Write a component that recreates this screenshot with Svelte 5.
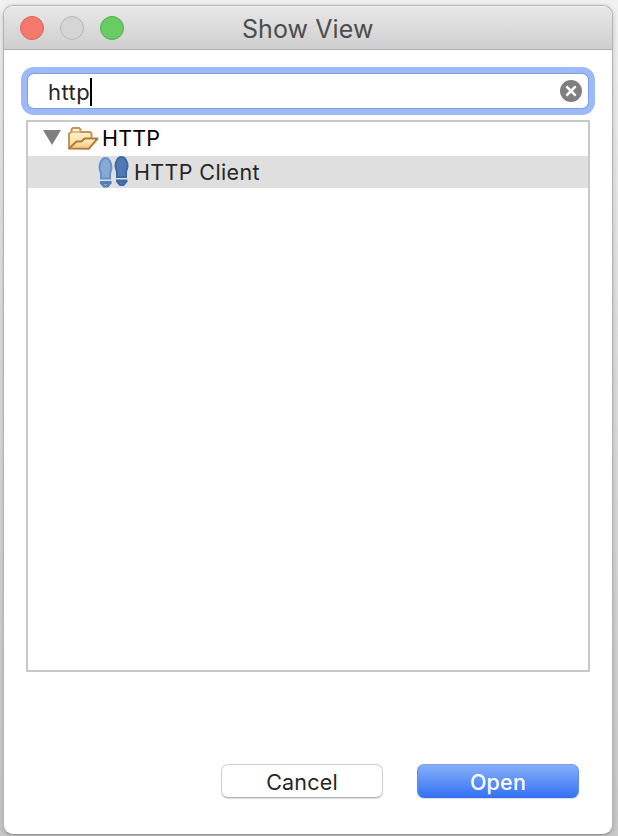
<script>
  let query = $state('http');
</script>

<div class="desktop">
  <section class="window">
    <header>
      <div class="lights"><i class="red"></i><i class="idle"></i><i class="green"></i></div>
      <h1>Show View</h1>
    </header>
    <main>
      <div class="search">
        <span class="query">{query}</span><span class="caret"></span>
        <svg class="clear" width="22" height="22" viewBox="0 0 22 22">
          <circle cx="11" cy="11" r="11" fill="#7f7f7f" />
          <path d="M6.4 6.4l9.2 9.2M15.6 6.4l-9.2 9.2" stroke="#fff" stroke-width="2.6" />
        </svg>
      </div>
      <div class="tree">
        <div class="row parent">
          <svg class="arrow" width="18" height="15" viewBox="0 0 18 15"><path d="M0 0h18L9 15z" fill="#808080" /></svg>
          <svg class="folder" width="32" height="24" viewBox="0 0 32 24">
            <defs>
              <linearGradient id="back" x2="0" y2="1"><stop stop-color="#fff6d5" /><stop offset="1" stop-color="#f5d897" /></linearGradient>
              <linearGradient id="front" x2="0" y2="1"><stop stop-color="#fff3cf" /><stop offset="1" stop-color="#efc77c" /></linearGradient>
            </defs>
            <path d="M2 21.5V6.5L4.5 5V2.5L6 1h6l1.5 1.5V5H23l1.5 1.5V12" fill="url(#back)" stroke="#c69454" stroke-width="2" />
            <path d="M5 5h9" stroke="#d6ab6c" stroke-width="1.5" />
            <path d="M2 21.5L9.5 14.5h5l3-3h13L22 21.7z" fill="url(#front)" stroke="#b5793c" stroke-width="2" stroke-linejoin="round" />
          </svg>
          <span class="group">HTTP</span>
        </div>
        <div class="row child">
          <svg class="feet" width="32" height="32" viewBox="0 0 32 32">
            <path d="M7.5 2C4 2 1.5 6.500 1.500 12L3 18v4.500h9V18l1.500-6C13.500 6.500 11 2 7.500 2z" fill="#87a9d6" stroke="#6690c9" stroke-width="2" />
            <path d="M2 25h11.500v2.500L10 31.500H5.500L2 27.500z" fill="#557fb9" />
            <path d="M5.500 28h4l-2 2.300z" fill="#87a9d6" />
            <path d="M23.500 1C20 1 17.500 5 17.500 10.500L19 16v5h9v-5l1.500-5.500C29.500 5 27 1 23.500 1z" fill="#5079b3" stroke="#3e69a8" stroke-width="2" />
            <path d="M18 23.500h11.500v2.300L26 30h-4.500L18 25.800z" fill="#3e69a8" />
            <path d="M21.500 26.500h4l-2 2z" fill="#5079b3" />
          </svg>
          <span class="item">HTTP Client</span>
        </div>
      </div>
      <footer>
        <button class="cancel"><span>Cancel</span></button>
        <button class="open"><span>Open</span></button>
      </footer>
    </main>
  </section>
</div>

<style>
  :global(body) { margin: 0; }
  .desktop {
    box-sizing: border-box; width: 618px; height: 836px; padding: 5px 5px 1px 3px; overflow: hidden;
    background: linear-gradient(#f1f1f1, #dedede 40%, #c9c9c9);
    font-family: Inter, "Liberation Sans", sans-serif;
  }
  .window {
    box-sizing: border-box; width: 610px; height: 830px; overflow: hidden; background: #fff;
    border: 1px solid #b5b5b5; border-bottom-color: #939393; border-radius: 10px;
    box-shadow: 0 1px 5px #0003; display: flex; flex-direction: column;
  }
  header {
    box-sizing: border-box; height: 44px; flex: none; display: flex; align-items: center; padding-left: 16px;
    background: linear-gradient(#e8e8e8, #cfcfcf); border-bottom: 1px solid #afafaf; box-shadow: inset 0 1px #f4f4f4;
  }
  .lights { display: flex; gap: 16px; width: 222px; }
  i { box-sizing: border-box; width: 24px; height: 24px; border-radius: 50%; border: 1px solid; }
  .red { background: #f4796c; border-color: #df6257; }
  .idle { background: #d5d5d5; border-color: #b7b7b7; }
  .green { background: #67cd62; border-color: #50ad49; }
  h1 { margin: 2px 0 0; font-size: 25px; line-height: 44px; font-weight: 400; letter-spacing: .08px; color: #4d4d4d; white-space: nowrap; }
  main { display: flex; flex-direction: column; padding: 24px 22px 0 23px; }
  .search {
    box-sizing: border-box; width: 560px; height: 34px; margin-left: 1px; padding: 0 6px 0 20px;
    display: flex; align-items: center; border-radius: 6px; background: #fff;
    box-shadow: 0 0 0 1px #7f9fe0, 0 0 0 7px #9db9f7;
  }
  .query { font-size: 22px; letter-spacing: .45px; color: #262626; line-height: 34px; padding-top: 1px; }
  .caret { width: 2px; height: 28px; background: #000; margin-top: 2px; }
  .clear { margin-left: auto; }
  .tree { box-sizing: border-box; width: 564px; height: 552px; margin: 12px 0 0 -1px; border: 2px solid #c8c8c8; }
  .row { display: flex; align-items: center; height: 32px; font-size: 21.5px; white-space: nowrap; }
  .parent { margin-bottom: 2px; padding-left: 15px; }
  .arrow { margin-bottom: 2px; }
  .folder { margin-left: 6px; margin-top: 2px; }
  .group { margin-left: 3px; color: #000; letter-spacing: .2px; }
  .child { background: #dfdfdf; padding-left: 70px; }
  .item { margin-left: 4px; color: #262626; letter-spacing: .36px; }
  footer { display: flex; justify-content: flex-end; gap: 34px; margin-top: 92px; padding-right: 11px; }
  button {
    box-sizing: border-box; width: 162px; height: 34px; padding: 0; border-radius: 7px;
    font: 21.5px/34px Inter, "Liberation Sans", sans-serif; letter-spacing: .2px;
    display: flex; align-items: center; justify-content: center;
  }
  button span { padding-top: 2px; }
  .cancel { background: #fff; border: 1px solid #d0d0d0; border-bottom-color: #b5b5b5; color: #262626; box-shadow: 0 1px 1px #0002; }
  .open {
    background: linear-gradient(#86aff8, #3573f6); border: 1px solid #5d8ff2; border-top-color: #78a1ee; border-bottom-color: #356ef0;
    color: #fff; font-weight: 500; box-shadow: 0 1px 1px #0002;
  }
</style>
